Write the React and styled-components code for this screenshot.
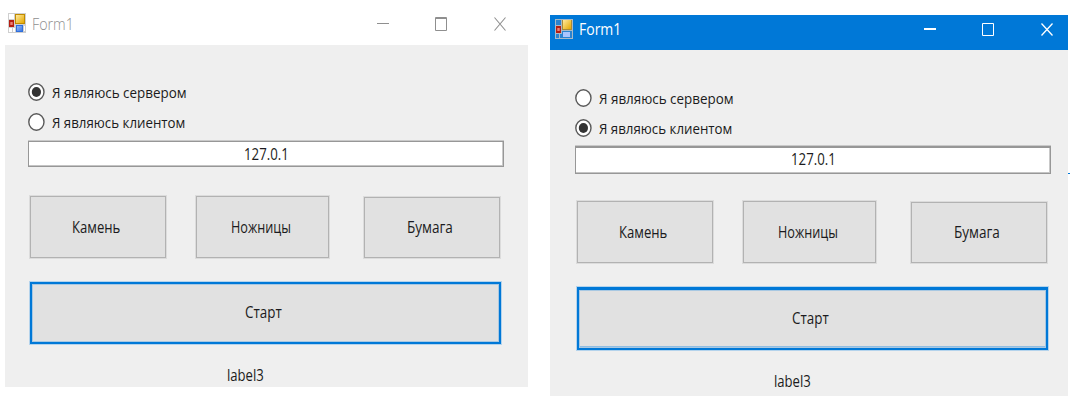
import React, { useLayoutEffect, useRef, useState } from 'react';
import styled, { createGlobalStyle } from 'styled-components';

const GlobalStyle = createGlobalStyle`
  * { box-sizing: border-box; }
  body { margin: 0; background: #fff; overflow: hidden; }
`;

const Desktop = styled.main`
  display: flex;
  align-items: flex-start;
  width: 1070px;
  height: 401px;
  gap: 22px;
  padding-left: 5px;
  overflow: hidden;
  background: #fff;
  font-family: 'Open Sans', 'Noto Sans', sans-serif;
`;

const Window = styled.section`
  flex: none;
  width: ${(p) => (p.$active ? 518 : 523)}px;
  margin-top: ${(p) => (p.$active ? 15 : 0)}px;
`;

const TitleBar = styled.header`
  display: flex;
  align-items: flex-start;
  height: ${(p) => (p.$active ? 35 : 45)}px;
  padding: ${(p) => (p.$active ? '4px 15px 0 5px' : '13px 22px 0 3px')};
  background: ${(p) => (p.$active ? '#0078d7' : '#fff')};
  color: ${(p) => (p.$active ? '#fff' : '#8f8f8f')};
`;

const Title = styled.h1`
  flex: 1;
  margin: ${(p) => (p.$active ? -1 : 0)}px 0 0 6px;
  font-size: 17px;
  font-weight: ${(p) => (p.$active ? 400 : 300)};
  line-height: 20px;
`;

const Controls = styled.div`
  display: flex;
  gap: 46px;
  padding-top: 4px;
`;

const Glyph = styled.svg`
  display: block;
  flex: none;
`;

const Body = styled.div`
  display: flex;
  flex-direction: column;
  height: ${(p) => (p.$active ? 346 : 342)}px;
  padding: ${(p) => (p.$active ? '33px 0 0 25px' : '32px 0 0 23px')};
  background: #efefef;
  color: #1b1b20;
  font-size: 15.6px;
`;

const Option = styled.label`
  display: flex;
  align-items: center;
  height: 30px;
  gap: 7px;
  font-size: 15.3px;
`;

const Field = styled.div`
  display: flex;
  justify-content: center;
  align-items: center;
  width: 476px;
  height: ${(p) => (p.$active ? 28 : 26)}px;
  margin-top: ${(p) => (p.$active ? 3 : 4)}px;
  padding: 0 0 ${(p) => (p.$active ? 4 : 0)}px;
  border: solid #979797;
  border-width: ${(p) => (p.$active ? '2px 1px 1px' : '1px')};
  background: #fff;
  box-shadow: 0 -1px #c9c9c9, inset 0 -1px #c4c4c4, inset -1px 0 #c9c9c9;
`;

const Choices = styled.div`
  display: flex;
  align-items: flex-end;
  height: 63px;
  margin: ${(p) => (p.$active ? 26 : 28)}px 0 0 2px;
`;

const Choice = styled.button`
  display: flex;
  justify-content: center;
  align-items: center;
  width: ${(p) => p.$width}px;
  height: ${(p) => p.$height}px;
  margin-right: ${(p) => p.$gap || 0}px;
  padding: 0 4px 1px 0;
  border: 1px solid #b2b2b2;
  background: #e1e1e1;
  box-shadow: 0 0 0 1px #dcdcdc;
  color: inherit;
  font: inherit;
`;

const Start = styled.button`
  display: flex;
  justify-content: center;
  align-items: center;
  width: 471px;
  height: ${(p) => (p.$active ? 63 : 62)}px;
  margin: 24px 0 0 2px;
  padding: 0 4px 2px 0;
  border: 2px solid #0078d7;
  border-top-width: ${(p) => (p.$active ? 3 : 2)}px;
  background: #e1e1e1;
  box-shadow: 0 0 0 1px #b4d3ec, inset 0 0 0 1px #a8c8e2,
    inset 0 ${(p) => (p.$active ? -2 : -1)}px #8fbde3;
  color: inherit;
  font: inherit;
`;

const Status = styled.div`
  display: flex;
  margin: 20px 0 0 199px;
`;

const Slot = styled.span`
  display: block;
  width: ${(p) => p.$width}px;
  line-height: 22px;
  white-space: nowrap;
`;

const Run = styled.span`
  display: inline-block;
  transform-origin: 0 50%;
`;

const EdgeMark = styled.i`
  align-self: flex-start;
  flex: none;
  width: 2px;
  height: 1px;
  margin: 173px 0 0 -22px;
  background: #0078d7;
`;

// Condenses a line of text to the given width.
function Fit({ width, children }) {
  const ref = useRef(null);
  const [scale, setScale] = useState(1);
  useLayoutEffect(() => {
    setScale(width / ref.current.offsetWidth);
  }, [width, children]);
  return (
    <Slot $width={width}>
      <Run ref={ref} style={{ transform: `scaleX(${scale})` }}>{children}</Run>
    </Slot>
  );
}

function FormIcon({ active }) {
  const id = active ? 'a' : 'b';
  const line = active ? '#a9b9c6' : '#cfcfcf';
  const pane = active ? '#2b83cf' : '#fff';
  return (
    <Glyph width="18" height="20" viewBox="0 0 18 20">
      <defs>
        <linearGradient id={`y${id}`} x1="0" y1="0" x2="1" y2="1">
          <stop offset="0" stopColor="#ffeaa0" />
          <stop offset="1" stopColor="#e6a800" />
        </linearGradient>
        <linearGradient id={`u${id}`} x1="0" y1="0" x2="1" y2="1">
          <stop offset="0" stopColor="#8fb8ff" />
          <stop offset="1" stopColor="#3c78e0" />
        </linearGradient>
      </defs>
      <rect width="18" height="20" fill={line} />
      <path d="M1 1h5v5H1zM1 15h3v4H1zM5 15h2v4H5zM16 13h1v5h-1z" fill={pane} />
      <rect x="1" y="7" width="5" height="7" fill="#b51e12" />
      <rect x="2.3" y="9" width="2.4" height="3" fill="#ee8175" />
      {active ? (
        <>
          <rect x="7" y="1" width="10" height="10" fill="#a98a3a" />
          <rect x="8" y="1" width="8" height="9" fill={`url(#y${id})`} />
          <path d="M7 12h10v7H7z" fill="#2b83cf" />
          <rect x="8" y="13" width="7" height="5" fill="#a9c5ff" />
        </>
      ) : (
        <>
          <rect x="7" y="1" width="10" height="10" fill="#c18b00" />
          <rect x="8" y="2" width="8" height="8" fill={`url(#y${id})`} />
          <rect x="8" y="12" width="7" height="7" fill="#2f6fdc" />
          <rect x="9" y="13" width="5" height="5" fill={`url(#u${id})`} />
        </>
      )}
    </Glyph>
  );
}

function WindowControls({ active }) {
  const s = { fill: 'none', stroke: 'currentColor' };
  return (
    <Controls>
      <Glyph width="12" height="14" viewBox="0 0 12 14">
        <path d={active ? 'M0 6H12' : 'M0 6.5H12'} {...s} strokeWidth={active ? 2 : 1} />
      </Glyph>
      <Glyph width="12" height="14" viewBox="0 0 12 14">
        <path d={active ? 'M.5 .5h11v12H.5z' : 'M.5 .5h11v13H.5zM0 1.5h12'} {...s} />
      </Glyph>
      <Glyph width="13" height="14" viewBox="0 0 13 14">
        <path d={active ? 'M1.5 .5l11 12M12.5 .5l-11 12' : 'M1.5 .5l11 13M12.5 .5l-11 13'} {...s} strokeWidth={active ? 1.3 : 1.1} />
      </Glyph>
    </Controls>
  );
}

function Radio({ checked }) {
  return (
    <Glyph width="17" height="18" viewBox="0 0 17 18">
      <ellipse cx="8.4" cy="9" rx="7.6" ry="8.2" fill="#fff" stroke="#5a5a5a" strokeWidth="1.4" />
      {checked && <ellipse cx="8.4" cy="9" rx="4.6" ry="5" fill="#333" />}
    </Glyph>
  );
}

function Form({ active, server }) {
  return (
    <Window $active={active}>
      <TitleBar $active={active}>
        <FormIcon active={active} />
        <Title $active={active}><Fit width={42}>Form1</Fit></Title>
        <WindowControls active={active} />
      </TitleBar>
      <Body $active={active}>
        <Option><Radio checked={server} /><Fit width={135}>Я являюсь сервером</Fit></Option>
        <Option><Radio checked={!server} /><Fit width={133}>Я являюсь клиентом</Fit></Option>
        <Field $active={active}><Fit width={45}>127.0.1</Fit></Field>
        <Choices $active={active}>
          <Choice $width={136} $height={62} $gap={30}><Fit width={48}>Камень</Fit></Choice>
          <Choice $width={133} $height={62} $gap={35}><Fit width={60}>Ножницы</Fit></Choice>
          <Choice $width={136} $height={61}><Fit width={46}>Бумага</Fit></Choice>
        </Choices>
        <Start $active={active}><Fit width={37}>Старт</Fit></Start>
        <Status><Fit width={37}>label3</Fit></Status>
      </Body>
    </Window>
  );
}

export default function App() {
  return (
    <>
      <GlobalStyle />
      <Desktop>
        <Form server />
        <Form active />
        <EdgeMark />
      </Desktop>
    </>
  );
}
